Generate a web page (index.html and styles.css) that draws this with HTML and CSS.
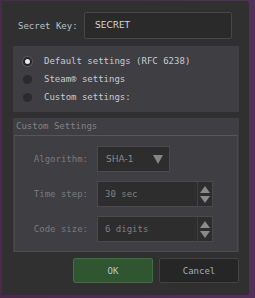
FILE: index.html
```html
<!DOCTYPE html>
<html lang="en">
<head>
  <meta charset="UTF-8" />
  <title>TOTP Settings</title>
  <link rel="stylesheet" href="styles.css">
</head>
<body>
  <div class="dialog">
    <div class="key-row">
      <label class="key-label">Secret Key:</label>
      <div class="key-input">SECRET</div>
    </div>

    <div class="panel">
      <div class="radio-row"><span class="radio checked"></span>Default settings (RFC 6238)</div>
      <div class="radio-row"><span class="radio"></span>Steam® settings</div>
      <div class="radio-row"><span class="radio"></span>Custom settings:</div>
    </div>

    <div class="group">
      <div class="group-title">Custom Settings</div>
      <div class="group-frame">
        <div class="field">
          <span class="field-label">Algorithm:</span>
          <div class="combo">SHA-1<span class="combo-arrow"></span></div>
        </div>
        <div class="field">
          <span class="field-label">Time step:</span>
          <div class="spin">
            <div class="spin-text">30 sec</div>
            <div class="spin-buttons"><span class="up"></span><span class="down"></span></div>
          </div>
        </div>
        <div class="field">
          <span class="field-label">Code size:</span>
          <div class="spin">
            <div class="spin-text">6 digits</div>
            <div class="spin-buttons"><span class="up"></span><span class="down"></span></div>
          </div>
        </div>
      </div>
    </div>

    <div class="buttons">
      <button class="btn ok">OK</button>
      <button class="btn cancel">Cancel</button>
    </div>
  </div>
</body>
</html>
```

FILE: styles.css
```css
html, body {
  margin: 0;
  padding: 0;
  height: 100%;
}

body {
  background: linear-gradient(to right, #4a2a4a, #52305a);
  font-family: 'DejaVu Sans Mono', monospace;
  font-size: 9px;
  overflow: hidden;
}

.dialog {
  margin: 1px 6px 0 2px;
  height: 294px;
  box-sizing: border-box;
  background-color: #303030;
  border-radius: 0 3px 3px 0;
  padding: 11px 10px 0 11px;
}

.key-row {
  display: flex;
  align-items: center;
  height: 27px;
  padding-left: 5px;
}

.key-label {
  color: #b5c0cb;
  width: 66px;
}

.key-input {
  flex: 0 0 148px;
  height: 27px;
  box-sizing: border-box;
  background-color: #2a2a2a;
  border: 1px solid #474747;
  border-radius: 2px;
  color: #d4d8dc;
  padding-left: 10px;
  line-height: 25px;
  font-family: 'DejaVu Sans', sans-serif;
}

.panel {
  margin-top: 7px;
  height: 66px;
  box-sizing: border-box;
  background-color: #3f3e42;
  padding: 6px 0 0 10px;
}

.radio-row {
  display: flex;
  align-items: center;
  height: 18px;
  color: #c6ccd2;
}

.radio {
  width: 9px;
  height: 9px;
  border-radius: 50%;
  background-color: #2b2b2d;
  margin-right: 12px;
  position: relative;
}

.radio.checked {
  background-color: #252527;
  box-shadow: 0 0 0 1px #5a5a5e;
}

.radio.checked::after {
  content: "";
  position: absolute;
  left: 2px;
  top: 2px;
  width: 5px;
  height: 5px;
  border-radius: 50%;
  background-color: #e8e8e8;
}

.group {
  margin-top: 6px;
  background-color: #3f3e42;
  padding: 0 1px;
}

.group-title {
  height: 17px;
  line-height: 17px;
  color: #828286;
  padding-left: 2px;
}

.group-frame {
  border-top: 1px solid #57565a;
  border-left: 1px solid #4c4b4f;
  border-right: 1px solid #4c4b4f;
  border-bottom: 1px solid #4c4b4f;
  padding: 10px 0 9px 0;
  display: flex;
  flex-direction: column;
  gap: 9px;
}

.field {
  display: flex;
  align-items: center;
  height: 26px;
}

.field-label {
  width: 73px;
  text-align: right;
  padding-right: 9px;
  color: #7a7a7e;
}

.combo {
  width: 73px;
  height: 26px;
  box-sizing: border-box;
  background-color: #2d2d2e;
  border: 1px solid #4a4a4c;
  color: #8a8a8c;
  padding-left: 8px;
  line-height: 24px;
  position: relative;
  font-family: 'DejaVu Sans', sans-serif;
}

.combo-arrow {
  position: absolute;
  right: 6px;
  top: 8px;
  width: 0;
  height: 0;
  border-left: 5px solid transparent;
  border-right: 5px solid transparent;
  border-top: 9px solid #858587;
}

.spin {
  display: flex;
  width: 116px;
  height: 26px;
  box-sizing: border-box;
  background-color: #2d2d2e;
  border: 1px solid #4a4a4c;
}

.spin-text {
  flex: 1;
  color: #7f7f82;
  padding-left: 7px;
  line-height: 24px;
}

.spin-buttons {
  width: 14px;
  border-left: 1px solid #3e3e40;
  display: flex;
  flex-direction: column;
  align-items: center;
  justify-content: center;
  gap: 3px;
}

.spin-buttons .up {
  width: 0;
  height: 0;
  border-left: 5px solid transparent;
  border-right: 5px solid transparent;
  border-bottom: 7px solid #8a8a8c;
}

.spin-buttons .down {
  width: 0;
  height: 0;
  border-left: 5px solid transparent;
  border-right: 5px solid transparent;
  border-top: 7px solid #8a8a8c;
}

.buttons {
  display: flex;
  justify-content: flex-end;
  gap: 6px;
  margin-top: 6px;
}

.btn {
  width: 80px;
  height: 25px;
  border-radius: 2px;
  font-family: 'DejaVu Sans Mono', monospace;
  font-size: 9px;
  padding: 0;
}

.ok {
  background-color: #2f5531;
  border: 1px solid #3f6e41;
  color: #b9c6d2;
}

.cancel {
  background-color: #262626;
  border: 1px solid #434343;
  color: #a3adb8;
}
```
